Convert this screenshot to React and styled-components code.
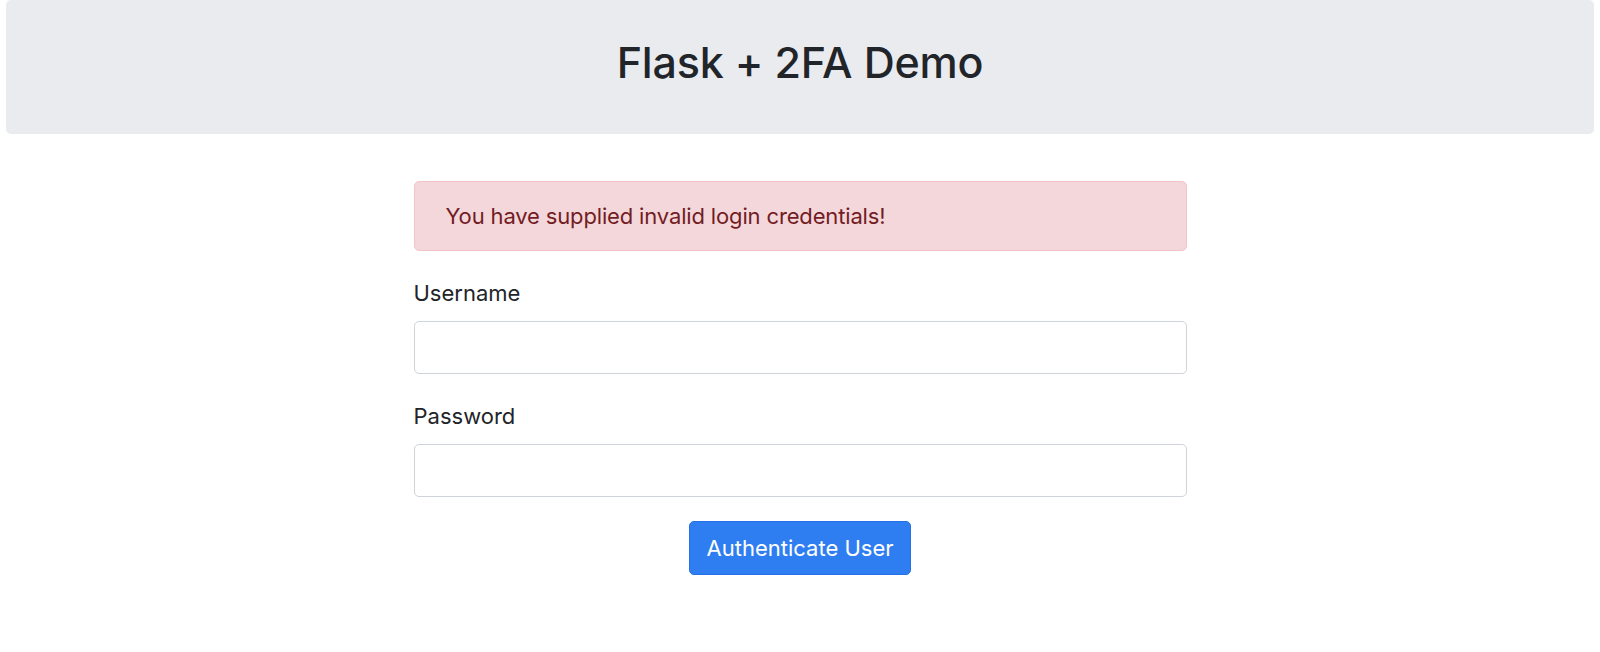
import React from "react";
import styled, { createGlobalStyle } from "styled-components";

const Global = createGlobalStyle`
  html, body { margin: 0; padding: 0; background: #ffffff; }
  body {
    font-family: Inter, "Noto Sans", "Liberation Sans", sans-serif;
    color: #212529;
    -webkit-font-smoothing: antialiased;
  }
  *, *::before, *::after { box-sizing: border-box; }
`;

const Jumbotron = styled.header`
  margin: 0 6px;
  height: 134px;
  padding-top: 37px;
  background: #e9ebef;
  border-radius: 5px;
  text-align: center;
`;

const Title = styled.h1`
  margin: 0;
  font-size: 43px;
  font-weight: 500;
  line-height: 1.2;
  letter-spacing: -0.2px;
  color: #212529;
`;

const Main = styled.main`
  width: 773px;
  margin: 47px auto 0;
`;

const Alert = styled.div`
  padding: 18px 31px 17px;
  font-size: 22px;
  line-height: 33px;
  letter-spacing: -0.15px;
  color: #721c24;
  background: #f4d7da;
  border: 1px solid #f2c4ca;
  border-radius: 5px;
`;

const Field = styled.div`
  margin-top: 26px;
  display: flex;
  flex-direction: column;
`;

const Label = styled.label`
  font-size: 22px;
  line-height: 33px;
  color: #212529;
  margin-bottom: 11px;
`;

const Input = styled.input`
  height: 53px;
  width: 100%;
  padding: 8px 16px;
  font-family: inherit;
  font-size: 22px;
  color: #495057;
  background: #ffffff;
  border: 1px solid #ced4da;
  border-radius: 5px;
  outline: none;
`;

const ButtonRow = styled.div`
  display: flex;
  justify-content: center;
  margin-top: 24px;
`;

const Button = styled.button`
  height: 54px;
  padding: 0 17px;
  font-family: inherit;
  font-size: 22px;
  font-weight: 400;
  color: #ffffff;
  background: #2f7ef1;
  border: 1px solid #2572e6;
  border-radius: 5px;
  cursor: pointer;
`;

export default function App() {
  return (
    <>
      <Global />
      <Jumbotron>
        <Title>Flask + 2FA Demo</Title>
      </Jumbotron>
      <Main>
        <Alert>You have supplied invalid login credentials!</Alert>
        <form onSubmit={(e) => e.preventDefault()}>
          <Field>
            <Label htmlFor="username">Username</Label>
            <Input id="username" type="text" />
          </Field>
          <Field>
            <Label htmlFor="password">Password</Label>
            <Input id="password" type="password" />
          </Field>
          <ButtonRow>
            <Button type="submit">Authenticate User</Button>
          </ButtonRow>
        </form>
      </Main>
    </>
  );
}
